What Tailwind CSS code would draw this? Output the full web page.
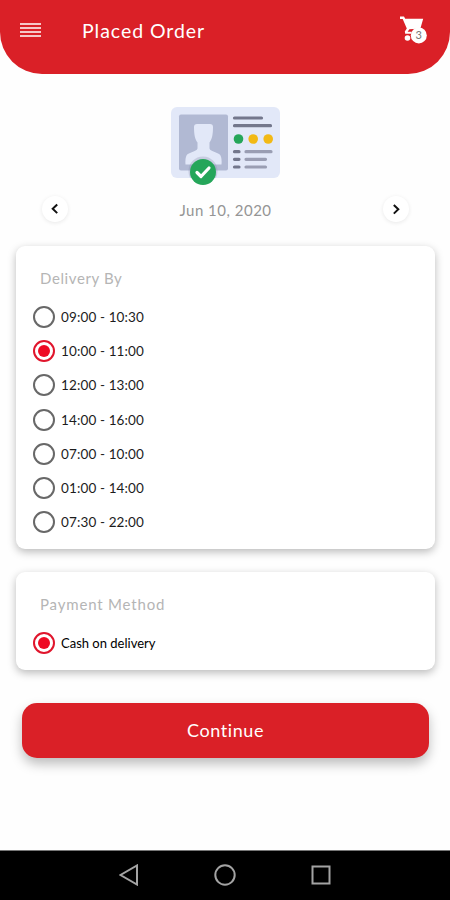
<!DOCTYPE html>
<html lang="en">
<head>
<meta charset="utf-8">
<meta name="viewport" content="width=device-width, initial-scale=1">
<title>Placed Order</title>
<script src="https://cdn.jsdelivr.net/npm/@tailwindcss/browser@4"></script>
</head>
<body class="bg-white">
<div class="flex h-[900px] w-[450px] flex-col overflow-hidden bg-[#fefefe] font-['Lato',sans-serif]">
  <header class="flex h-[74px] shrink-0 items-start rounded-b-[42px] bg-[#da2027] pl-5 pr-[22px] text-white">
    <svg class="mt-[22px] h-4 w-[21px]" viewBox="0 0 21 16" stroke="#fff" stroke-width="1.7"><path d="M0 2h21M0 6h21M0 10h21M0 14h21"/></svg>
    <h1 class="ml-[41px] mt-[19px] text-[19.5px] leading-6 tracking-[0.95px]">Placed Order</h1>
    <svg class="ml-auto mt-[15px] h-[30px] w-7" viewBox="0 0 28 30">
      <path d="M0 1.500h4l1.200 2.300h18l-2.800 9.700-11 .8-1.800 2.500h4v2H5.200l-.4-2.400 2-3L2.700 4H0z" fill="#fff"/>
      <path d="M5.500 5h16.500l-2.500 8-11 .5z" fill="#fff"/>
      <circle cx="7.500" cy="23" r="2.800" fill="#fff"/>
      <circle cx="18.800" cy="20.400" r="8" fill="#fff"/>
      <text x="18.800" y="24.300" text-anchor="middle" font-family="Lato, sans-serif" font-size="11" fill="#777">3</text>
    </svg>
  </header>

  <main class="flex flex-1 flex-col">
    <svg class="ml-[170px] mt-[32px] h-[81px] w-[111px]" viewBox="0 0 111 81">
      <rect x="1" y="1" width="109" height="71" rx="6" fill="#e2e8f8"/>
      <rect x="9" y="8.500" width="49" height="56" rx="2" fill="#b1b9d3"/>
      <path d="M24 21q0-3 3-3h13q3 0 3 3c0 8-1 12-3.500 15.500v6c1 3.500 9 3.500 11 7q1.500 3 1 9H15.500q-.5-6 1-9c2-3.500 10-3.500 11-7v-6C25 33 24 29 24 21z" fill="#e2e8f8"/>
      <circle cx="33" cy="65" r="14.500" fill="#858ba8" opacity=".3"/>
      <path d="M18 72h30v9H18z" fill="#fefefe"/>
      <circle cx="33" cy="66" r="13" fill="#25a65a"/>
      <path d="M27 66.500l4 4 8-8.500" fill="none" stroke="#fff" stroke-width="3.200" stroke-linecap="round" stroke-linejoin="round"/>
      <g fill="none" stroke-width="3.200" stroke-linecap="round">
        <path d="M64.500 12h27M64.500 19.700h36" stroke="#73778c"/>
        <path d="M64.500 45.700h4.500M64.500 53.300h4.500M64.500 61h4.500" stroke="#73778c"/>
        <path d="M76 45.700h25M76 53.300h19.500M76 61h19.500" stroke="#9a9eb3"/>
      </g>
      <circle cx="68.500" cy="33" r="4.800" fill="#25a65a"/>
      <circle cx="83.200" cy="33" r="4.800" fill="#f2b915"/>
      <circle cx="98.200" cy="33" r="4.800" fill="#f2b915"/>
    </svg>

    <div class="mt-[9px] flex h-[26px] items-center justify-between pl-[42px] pr-[41px]">
      <button aria-label="Previous day" class="flex h-[26px] w-[26px] items-center justify-center rounded-full bg-white shadow-[0_1px_4px_rgba(0,0,0,0.09)]">
        <svg class="h-3 w-2" viewBox="0 0 8 12" fill="none" stroke="#111" stroke-width="2"><path d="M6.200 1.500L1.700 5.800l4.500 4.300"/></svg>
      </button>
      <p class="mt-[2px] text-[15px] leading-5 tracking-[0.5px] text-[#959595]">Jun 10, 2020</p>
      <button aria-label="Next day" class="flex h-[26px] w-[26px] items-center justify-center rounded-full bg-white shadow-[0_1px_4px_rgba(0,0,0,0.09)]">
        <svg class="h-3 w-2" viewBox="0 0 8 12" fill="none" stroke="#111" stroke-width="2"><path d="M1.800 2l4.500 4.300-4.500 4.300"/></svg>
      </button>
    </div>

    <section class="ml-4 mt-[24px] h-[303px] w-[419px] shrink-0 rounded-[9px] bg-white pl-[17px] pt-[22px] shadow-[0_3px_8px_rgba(0,0,0,0.27)]">
      <h2 class="ml-[7px] h-5 text-[15px] leading-5 tracking-[0.6px] text-[#b5b5b5]">Delivery By</h2>
      <div class="mt-[12px] flex flex-col text-[13.5px] tracking-[0.13px] text-[#1c1c1c]">
        <label class="flex h-[34.2px] items-center gap-[6px]"><span class="h-[22px] w-[22px] rounded-full border-2 border-[#686868]"></span><span>09:00 - 10:30</span></label>
        <label class="flex h-[34.2px] items-center gap-[6px]"><span class="flex h-[22px] w-[22px] items-center justify-center rounded-full border-2 border-[#e0152c]"><span class="h-3 w-3 rounded-full bg-[#ee0a24]"></span></span><span>10:00 - 11:00</span></label>
        <label class="flex h-[34.2px] items-center gap-[6px]"><span class="h-[22px] w-[22px] rounded-full border-2 border-[#686868]"></span><span>12:00 - 13:00</span></label>
        <label class="flex h-[34.2px] items-center gap-[6px]"><span class="h-[22px] w-[22px] rounded-full border-2 border-[#686868]"></span><span>14:00 - 16:00</span></label>
        <label class="flex h-[34.2px] items-center gap-[6px]"><span class="h-[22px] w-[22px] rounded-full border-2 border-[#686868]"></span><span>07:00 - 10:00</span></label>
        <label class="flex h-[34.2px] items-center gap-[6px]"><span class="h-[22px] w-[22px] rounded-full border-2 border-[#686868]"></span><span>01:00 - 14:00</span></label>
        <label class="flex h-[34.2px] items-center gap-[6px]"><span class="h-[22px] w-[22px] rounded-full border-2 border-[#686868]"></span><span>07:30 - 22:00</span></label>
      </div>
    </section>

    <section class="ml-4 mt-[23px] h-[98px] w-[419px] shrink-0 rounded-[9px] bg-white pl-[17px] pt-[22px] shadow-[0_3px_8px_rgba(0,0,0,0.27)]">
      <h2 class="ml-[7px] h-5 text-[15px] leading-5 tracking-[0.82px] text-[#b5b5b5]">Payment Method</h2>
      <label class="mt-[12px] flex h-[34px] items-center gap-[6px] text-[13px] text-black"><span class="flex h-[22px] w-[22px] items-center justify-center rounded-full border-2 border-[#e0152c]"><span class="h-3 w-3 rounded-full bg-[#ee0a24]"></span></span><span class="mt-px">Cash on delivery</span></label>
    </section>

    <button class="ml-[22px] mt-[33px] flex h-[55px] w-[407px] shrink-0 items-center justify-center rounded-[15px] bg-[#da2027] pb-px text-[18px] tracking-[0.6px] text-white shadow-[0_6px_12px_rgba(0,0,0,0.26)]">Continue</button>
  </main>

  <nav class="flex h-[50px] shrink-0 items-center justify-between border-t border-[#777] bg-black pb-px pl-[119px] pr-[119px]">
    <svg class="h-[22px] w-5" viewBox="0 0 20 22" fill="none" stroke="#a3a3a3" stroke-width="2"><path d="M18 1.500v19L1.500 11z"/></svg>
    <svg class="h-[22px] w-[22px]" viewBox="0 0 22 22" fill="none" stroke="#a3a3a3" stroke-width="2"><circle cx="11" cy="11" r="9.700"/></svg>
    <svg class="h-[22px] w-5" viewBox="0 0 20 22" fill="none" stroke="#a3a3a3" stroke-width="2"><rect x="1.500" y="2.500" width="17" height="17"/></svg>
  </nav>
</div>
</body>
</html>
